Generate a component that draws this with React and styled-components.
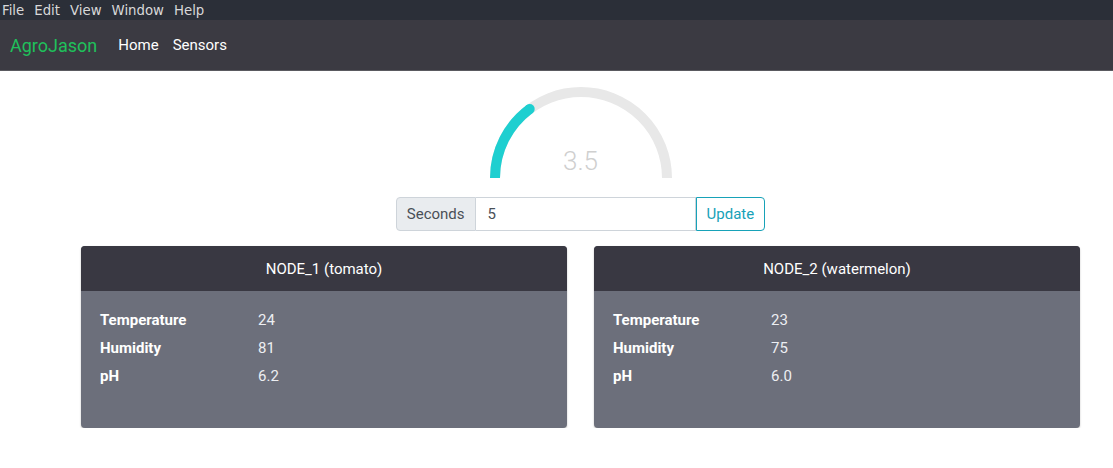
import React from 'react';
import styled, { createGlobalStyle } from 'styled-components';

const GlobalStyle = createGlobalStyle`
    body {
        margin: 0;
        background: #fff;
        font-family: Roboto, "Liberation Sans", sans-serif;
    }
`;

const MenuBar = styled.div`
    display: flex;
    align-items: center;
    gap: 10px;
    height: 20px;
    padding: 0 2px;
    background: #2b2f38;
    color: #d8d8d8;
    font-family: "DejaVu Sans", sans-serif;
    font-size: 13.3px;
`;

const NavBar = styled.nav`
    display: flex;
    align-items: center;
    height: 51px;
    padding: 0 10px;
    background: #3b3a42;
    border-bottom: 1px solid #5a5a60;
    box-sizing: border-box;
`;

const Brand = styled.span`
    color: #1fc05b;
    font-size: 18px;
    margin-right: 21px;
`;

const NavLink = styled.span`
    color: #fff;
    font-size: 15px;
    margin-right: 14px;
`;

const Main = styled.div`
    display: flex;
    flex-direction: column;
    align-items: center;
    padding-top: 16px;
    padding-left: 48px;
`;

const GaugeWrap = styled.div`
    position: relative;
    width: 184px;
    height: 93px;
`;

const GaugeValue = styled.div`
    position: absolute;
    left: 0;
    right: 0;
    top: 59px;
    text-align: center;
    color: #cfcfcf;
    font-size: 26px;
    font-weight: 300;
`;

const InputGroup = styled.div`
    display: flex;
    height: 34px;
    margin-top: 17px;
    font-size: 15px;
`;

const Addon = styled.div`
    display: flex;
    align-items: center;
    padding: 0 10px;
    background: #e9ecef;
    border: 1px solid #ced4da;
    border-radius: 4px 0 0 4px;
    color: #495057;
`;

const Input = styled.div`
    display: flex;
    align-items: center;
    width: 220px;
    padding: 0 12px;
    border: 1px solid #ced4da;
    border-left: none;
    box-sizing: border-box;
    color: #495057;
`;

const Button = styled.div`
    display: flex;
    align-items: center;
    padding: 0 10px;
    border: 1px solid #17a2b8;
    border-radius: 0 4px 4px 0;
    color: #17a2b8;
`;

const Cards = styled.div`
    display: flex;
    gap: 27px;
    margin-top: 15px;
`;

const Card = styled.div`
    width: 486px;
    height: 182px;
    border-radius: 4px;
    overflow: hidden;
    background: #6c6f7b;
    box-shadow: 0 1px 2px rgba(0, 0, 0, 0.25);
`;

const CardHeader = styled.div`
    height: 45px;
    display: flex;
    align-items: center;
    justify-content: center;
    background: #393842;
    color: #fff;
    font-size: 15px;
`;

const CardBody = styled.div`
    display: grid;
    grid-template-columns: 158px 1fr;
    row-gap: 10px;
    padding: 20px 19px;
    color: #fff;
    font-size: 15px;
`;

const Label = styled.div`
    font-weight: 700;
`;

const Value = styled.div`
    color: #eceef2;
`;

const Gauge = ({ value, max }) => {
    const r = 86;
    const cx = 92;
    const cy = 91;
    const frac = value / max;
    const a = Math.PI * (1 - frac);
    const ex = cx + r * Math.cos(a);
    const ey = cy - r * Math.sin(a);
    return (
        <GaugeWrap>
            <svg width="184" height="93" viewBox="0 0 184 93">
                <path
                    d={`M ${cx - r} ${cy} A ${r} ${r} 0 0 1 ${cx + r} ${cy}`}
                    fill="none"
                    stroke="#e8e8e8"
                    strokeWidth="10"
                />
                <path
                    d={`M ${cx - r} ${cy} A ${r} ${r} 0 0 1 ${ex} ${ey}`}
                    fill="none"
                    stroke="#1ecfd0"
                    strokeWidth="10"
                />
                <circle cx={ex} cy={ey} r="5" fill="#1ecfd0" />
            </svg>
            <GaugeValue>{value}</GaugeValue>
        </GaugeWrap>
    );
};

const nodes = [
    { name: 'NODE_1 (tomato)', temp: '24', hum: '81', ph: '6.2' },
    { name: 'NODE_2 (watermelon)', temp: '23', hum: '75', ph: '6.0' },
];

export default function App() {
    return (
        <>
            <GlobalStyle />
            <MenuBar>
                <span>File</span>
                <span>Edit</span>
                <span>View</span>
                <span>Window</span>
                <span>Help</span>
            </MenuBar>
            <NavBar>
                <Brand>AgroJason</Brand>
                <NavLink>Home</NavLink>
                <NavLink>Sensors</NavLink>
            </NavBar>
            <Main>
                <Gauge value={3.5} max={11.8} />
                <InputGroup>
                    <Addon>Seconds</Addon>
                    <Input>5</Input>
                    <Button>Update</Button>
                </InputGroup>
                <Cards>
                    {nodes.map(n => (
                        <Card key={n.name}>
                            <CardHeader>{n.name}</CardHeader>
                            <CardBody>
                                <Label>Temperature</Label>
                                <Value>{n.temp}</Value>
                                <Label>Humidity</Label>
                                <Value>{n.hum}</Value>
                                <Label>pH</Label>
                                <Value>{n.ph}</Value>
                            </CardBody>
                        </Card>
                    ))}
                </Cards>
            </Main>
        </>
    );
}
